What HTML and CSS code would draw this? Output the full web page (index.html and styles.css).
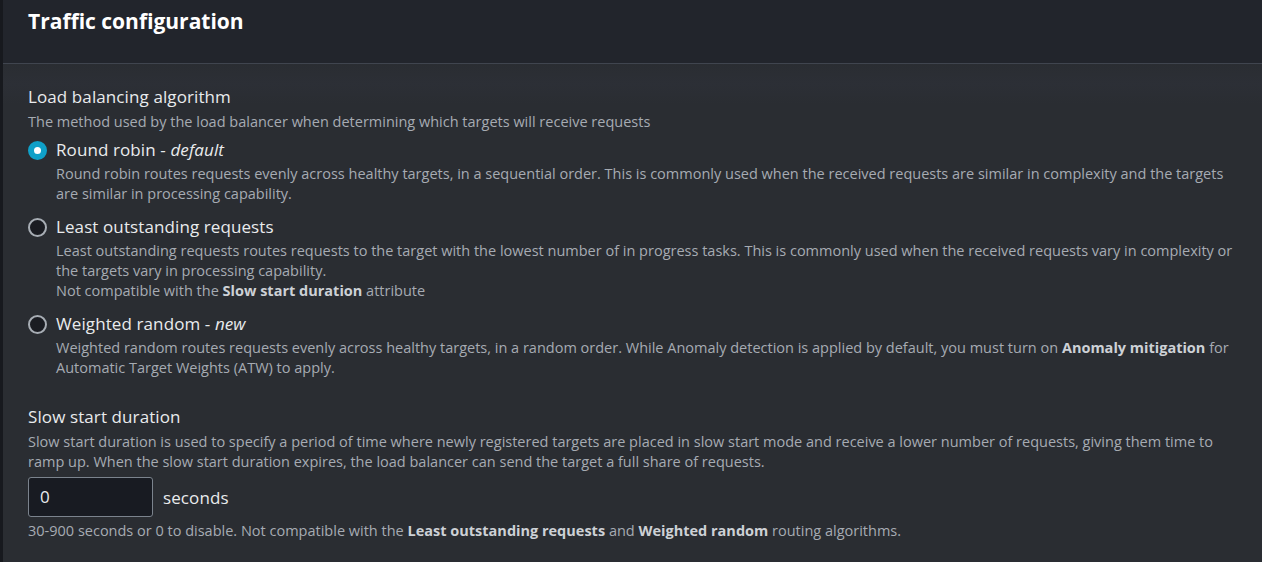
FILE: index.html
```html
<!DOCTYPE html>
<html lang="en">
<head>
<meta charset="utf-8">
<title>Traffic configuration</title>
<link rel="stylesheet" href="styles.css">
</head>
<body>
<div class="page">
  <div class="strip"></div>
  <section class="container">
    <header class="header">
      <h2 class="title">Traffic configuration</h2>
    </header>
    <div class="content">
      <div class="field">
        <div class="label">Load balancing algorithm</div>
        <div class="desc">The method used by the load balancer when determining which targets will receive requests</div>
        <div class="radios">
          <div class="radio">
            <span class="dot checked"></span>
            <div class="radio-body">
              <div class="radio-label">Round robin - <i>default</i></div>
              <div class="desc">Round robin routes requests evenly across healthy targets, in a sequential order. This is commonly used when the received requests are similar in complexity and the targets are similar in processing capability.</div>
            </div>
          </div>
          <div class="radio">
            <span class="dot"></span>
            <div class="radio-body">
              <div class="radio-label">Least outstanding requests</div>
              <div class="desc">Least outstanding requests routes requests to the target with the lowest number of in progress tasks. This is commonly used when the received requests vary in complexity or the targets vary in processing capability.<br>Not compatible with the <b>Slow start duration</b> attribute</div>
            </div>
          </div>
          <div class="radio">
            <span class="dot"></span>
            <div class="radio-body">
              <div class="radio-label">Weighted random - <i>new</i></div>
              <div class="desc">Weighted random routes requests evenly across healthy targets, in a random order. While Anomaly detection is applied by default, you must turn on <b>Anomaly mitigation</b> for Automatic Target Weights (ATW) to apply.</div>
            </div>
          </div>
        </div>
      </div>
      <div class="field slow">
        <div class="label">Slow start duration</div>
        <div class="desc">Slow start duration is used to specify a period of time where newly registered targets are placed in slow start mode and receive a lower number of requests, giving them time to ramp up. When the slow start duration expires, the load balancer can send the target a full share of requests.</div>
        <div class="input-row">
          <div class="input">0</div>
          <span class="unit">seconds</span>
        </div>
        <div class="desc hint">30-900 seconds or 0 to disable. Not compatible with the <b>Least outstanding requests</b> and <b>Weighted random</b> routing algorithms.</div>
      </div>
    </div>
  </section>
</div>
</body>
</html>
```

FILE: styles.css
```css
* { box-sizing: border-box; }
html, body { margin: 0; padding: 0; }
body {
  background: #2a2d32;
  font-family: "Open Sans", "Noto Sans", sans-serif;
  color: #e9ebed;
  width: 1262px;
  height: 562px;
  overflow: hidden;
}
.page { display: flex; height: 562px; }
.strip { width: 3px; background: #17191e; flex: none; }
.container { flex: 1; display: flex; flex-direction: column; }
.header {
  height: 64px;
  background: #22252c;
  border-bottom: 1px solid #40454f;
  padding: 6px 0 0 25px;
}
.title {
  margin: 0;
  font-size: 21px;
  font-weight: 700;
  line-height: 30px;
  color: #ffffff;
}
.content {
  flex: 1;
  background: linear-gradient(#2a2d32 0, #2c2f36 20px, #2a2d32 40px);
  padding: 21px 18px 0 25px;
}
.label { font-size: 17px; line-height: 24px; letter-spacing: 0.1px; color: #e9ebed; }
.desc { font-size: 14.5px; line-height: 20px; color: #a6abb2; }
.label + .desc { margin-top: 3px; }
.desc b { font-weight: 700; color: #cdd1d6; }
.radios { display: flex; flex-direction: column; gap: 11px; margin-top: 6px; }
.radio { display: flex; gap: 9px; }
.dot {
  width: 19px; height: 19px; flex: none;
  border-radius: 50%;
  border: 2px solid #a7adb4;
  background: #1a1c22;
  margin-top: 3px;
}
.dot.checked {
  border: 6px solid #0fa0c8;
  background: #ffffff;
}
.radio-label { font-size: 17px; line-height: 24px; letter-spacing: 0.1px; color: #e9ebed; }
.radio-label + .desc { margin-top: 2px; }
.slow { margin-top: 27px; }
.input-row { display: flex; align-items: center; gap: 10px; margin-top: 5px; }
.input {
  width: 125px; height: 40px;
  background: #181b22;
  border: 1px solid #7b838d;
  border-radius: 3px;
  padding: 0 11px;
  font-size: 17px;
  line-height: 38px;
  color: #e9ebed;
}
.unit { font-size: 17px; letter-spacing: 0.1px; color: #e9ebed; }
.hint { margin-top: 4px; }
```
